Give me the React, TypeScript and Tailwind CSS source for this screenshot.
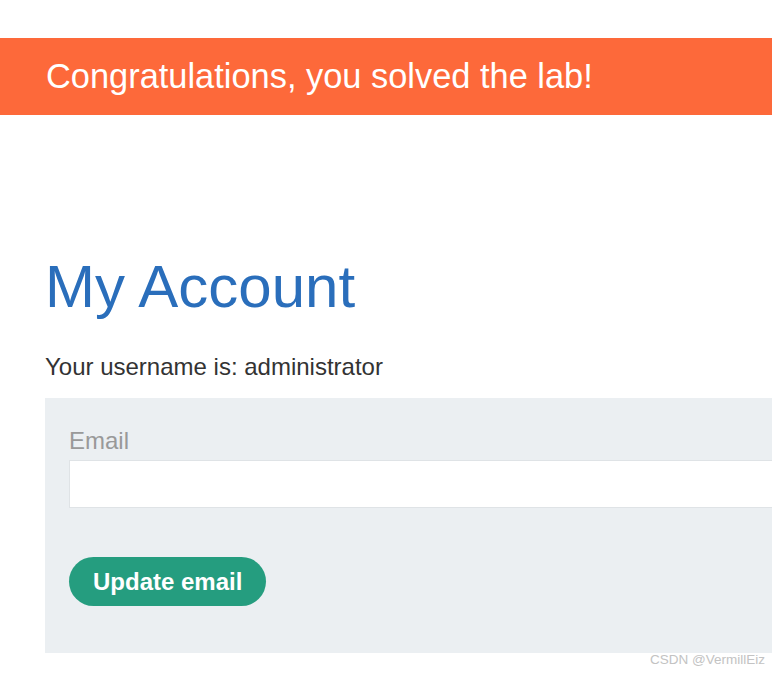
import React from "react";

export default function App() {
  return (
    <div
      className="relative w-[772px] h-[673px] overflow-hidden bg-white"
      style={{ fontFamily: '"Liberation Sans", Arial, sans-serif' }}
    >
      <div className="h-[38px]" />
      <div className="h-[77px] bg-[#fd693a] flex items-center pl-[46px]">
        <h4 className="text-[34.4px] leading-none text-white m-0 font-normal">
          Congratulations, you solved the lab!
        </h4>
      </div>
      <div className="pl-[45px]">
        <h1 className="mt-[142px] text-[60px] leading-none text-[#2a6ebb] font-normal">
          My Account
        </h1>
        <p className="mt-[38px] text-[24px] leading-none text-[#333]">
          Your username is: administrator
        </p>
        <div className="mt-[19px] h-[255px] w-[800px] bg-[#ebeff2] pl-[24px] pt-[31px]">
          <label className="block text-[24px] leading-none text-[#999]">Email</label>
          <input
            className="block mt-[7px] h-[48px] w-[760px] bg-white border border-[#dfe3e6] outline-none"
            type="email"
          />
          <button className="mt-[49px] h-[49px] px-[24px] rounded-full bg-[#259d7f] text-white text-[24px] font-bold leading-none">
            Update email
          </button>
        </div>
      </div>
      <div className="absolute right-[7px] top-[653px] text-[13.5px] text-[#c3c3c3] leading-none">
        CSDN @VermillEiz
      </div>
    </div>
  );
}
